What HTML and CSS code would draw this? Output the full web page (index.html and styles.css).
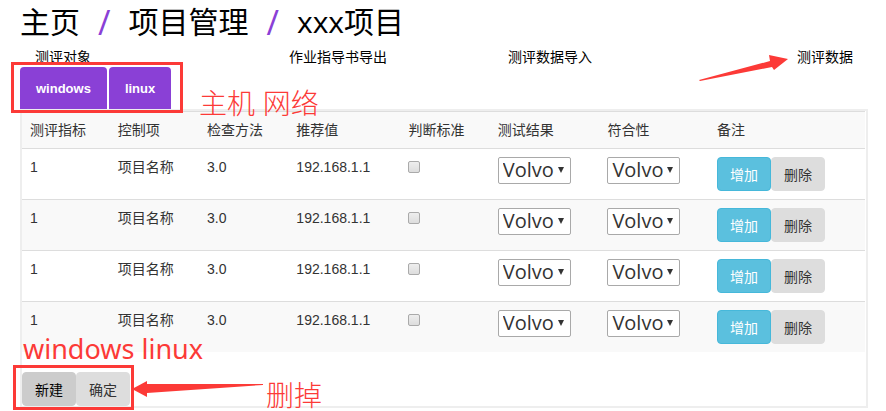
FILE: index.html
```
<!DOCTYPE html>
<html lang="zh-CN">
<head>
<meta charset="utf-8">
<title>项目管理</title>
<link rel="stylesheet" href="styles.css">
</head>
<body>
<main class="page">
  <nav class="crumbs">
    <a href="#">主页</a><span class="slash">/</span><a href="#">项目管理</a><span class="slash">/</span><a href="#">xxx项目</a>
  </nav>
  <nav class="links">
    <a href="#">测评对象</a>
    <a href="#">作业指导书导出</a>
    <a href="#">测评数据导入</a>
    <a class="pointed" href="#">测评数据<svg class="arrow-up" width="90" height="26" viewBox="0 0 90 26" aria-hidden="true"><path d="M0 25L71 6L70 0L89 4L75 15L73 12L1 26Z"/></svg></a>
  </nav>
  <div class="tabs">
    <button class="tab" type="button">windows</button>
    <button class="tab" type="button">linux</button>
    <span class="note note-tabs">主机 网络</span>
  </div>
  <section class="panel">
    <table class="grid">
      <colgroup><col class="c88"><col class="c89"><col class="c89"><col class="c113"><col class="c89"><col class="c110"><col class="c110"><col></colgroup>
      <thead>
        <tr><th>测评指标</th><th>控制项</th><th>检查方法</th><th>推荐值</th><th>判断标准</th><th>测试结果</th><th>符合性</th><th>备注</th></tr>
      </thead>
      <tbody>
        <tr>
          <td>1</td><td>项目名称</td><td>3.0</td><td>192.168.1.1</td>
          <td><input class="check" type="checkbox" aria-label="判断标准"></td>
          <td><span class="pick"><select aria-label="测试结果"><option>Volvo</option></select></span></td>
          <td><span class="pick"><select aria-label="符合性"><option>Volvo</option></select></span></td>
          <td><div class="buttons"><button class="btn add" type="button">增加</button><button class="btn" type="button">删除</button></div></td>
        </tr>
        <tr>
          <td>1</td><td>项目名称</td><td>3.0</td><td>192.168.1.1</td>
          <td><input class="check" type="checkbox" aria-label="判断标准"></td>
          <td><span class="pick"><select aria-label="测试结果"><option>Volvo</option></select></span></td>
          <td><span class="pick"><select aria-label="符合性"><option>Volvo</option></select></span></td>
          <td><div class="buttons"><button class="btn add" type="button">增加</button><button class="btn" type="button">删除</button></div></td>
        </tr>
        <tr>
          <td>1</td><td>项目名称</td><td>3.0</td><td>192.168.1.1</td>
          <td><input class="check" type="checkbox" aria-label="判断标准"></td>
          <td><span class="pick"><select aria-label="测试结果"><option>Volvo</option></select></span></td>
          <td><span class="pick"><select aria-label="符合性"><option>Volvo</option></select></span></td>
          <td><div class="buttons"><button class="btn add" type="button">增加</button><button class="btn" type="button">删除</button></div></td>
        </tr>
        <tr>
          <td>1</td><td>项目名称</td><td>3.0</td><td>192.168.1.1</td>
          <td><input class="check" type="checkbox" aria-label="判断标准"></td>
          <td><span class="pick"><select aria-label="测试结果"><option>Volvo</option></select></span></td>
          <td><span class="pick"><select aria-label="符合性"><option>Volvo</option></select></span></td>
          <td><div class="buttons"><button class="btn add" type="button">增加</button><button class="btn" type="button">删除</button></div></td>
        </tr>
      </tbody>
    </table>
    <div class="buttons footer">
      <button class="btn active" type="button">新建</button><button class="btn" type="button">确定</button>
      <span class="note note-systems">windows linux</span>
      <svg class="arrow-left" width="134" height="16" viewBox="0 0 134 16" aria-hidden="true"><path d="M0 8L15 0V3L131 3V4L15 12V16Z"/></svg>
      <span class="note note-remove">删掉</span>
    </div>
  </section>
</main>
</body>
</html>
```
FILE: styles.css
```
* {
  box-sizing: border-box;
}

body {
  margin: 0;
  background: #fff;
  color: #333;
  font: 14px/20px "Liberation Sans", "Noto Sans CJK SC", sans-serif;
}

a {
  color: #000;
  text-decoration: none;
}

button,
select {
  font-family: inherit;
}

.page {
  padding: 0 18px 3px 20px;
}

.crumbs {
  display: flex;
  gap: 18px;
  height: 42px;
  padding-top: 2px;
  font: 30px/40px "Open Sans", "Noto Sans CJK SC", sans-serif;
}

.slash {
  color: #8a40d6;
  font-size: 34px;
}

.links {
  display: grid;
  grid-template-columns: 254fr 219fr 289fr 56px;
  padding: 5px 15px 0;
  white-space: nowrap;
}

.pointed {
  position: relative;
}

.arrow-up {
  position: absolute;
  top: 8px;
  right: 64px;
  fill: #fc3a37;
}

.tabs {
  position: relative;
  display: flex;
  gap: 2px;
  width: max-content;
}

.tabs::after,
.footer::after {
  position: absolute;
  inset: -5px -12px -4px -9px;
  border: 3px solid #fc3a37;
  content: "";
  pointer-events: none;
}

.tab {
  height: 42px;
  padding: 0 16px;
  border: 0;
  border-radius: 4px 4px 0 0;
  background: #8a40d6;
  color: #fff;
  font-size: 13px;
  font-weight: bold;
}

.panel {
  border: 2px solid #eee;
  border-top: 0;
}

.panel::before {
  display: block;
  height: 2px;
  background: #eee;
  content: "";
}

.grid {
  width: calc(100% - 1px);
  border-collapse: collapse;
  table-layout: fixed;
}

.c88 { width: 10.4%; }
.c89 { width: 10.6%; }
.c113 { width: 13.3%; }
.c110 { width: 13%; }

th,
td {
  padding: 8px;
  border-top: 1px solid #ddd;
  font-weight: normal;
  text-align: left;
  vertical-align: top;
}

th,
tbody tr:nth-child(even) {
  background: #f9f9f9;
}

.check {
  display: block;
  width: 12px;
  height: 12px;
  margin: 4px 0 0;
  border: 1px solid #aaa;
  border-radius: 2px;
  background: linear-gradient(#eee, #ddd);
  appearance: none;
}

.check:checked {
  background: #777;
}

.pick {
  position: relative;
  display: block;
  width: 73px;
}

.pick::after {
  position: absolute;
  top: 10px;
  right: 7px;
  border: 3px solid transparent;
  border-top: 6px solid #333;
  border-bottom: 0;
  content: "";
  pointer-events: none;
}

.pick select {
  display: block;
  width: 100%;
  height: 27px;
  padding: 0 4px 2px;
  border: 1px solid #a9a9a9;
  border-radius: 2px;
  background: #fff;
  color: #333;
  font: 20px/23px "Open Sans", sans-serif;
  appearance: none;
}

.buttons {
  display: flex;
}

.btn {
  width: 54px;
  height: 34px;
  padding: 0;
  border: 1px solid #ddd;
  border-radius: 4px;
  background: #ddd;
  color: #333;
  font-size: 14px;
}

.btn.add {
  border-color: #46b8da;
  background: #5bc0de;
  color: #fff;
}

.btn.active {
  border-color: #ccc;
  background: #ccc;
  color: #000;
}

.footer {
  position: relative;
  width: max-content;
  margin-top: 20px;
}

.footer::after {
  inset: -7px -4px -4px -9px;
}

.note {
  position: absolute;
  color: #fc3a37;
  font-size: 28px;
  font-weight: 300;
  line-height: 24px;
  white-space: nowrap;
}

.note-tabs {
  top: 26px;
  left: 179px;
}

.note-systems {
  bottom: 45px;
  left: 1px;
  font-family: "Noto Sans", sans-serif;
  font-size: 27px;
  font-weight: 400;
}

.arrow-left {
  position: absolute;
  top: 9px;
  left: 110px;
  fill: #fc3a37;
}

.note-remove {
  top: 13px;
  left: 244px;
}
```
